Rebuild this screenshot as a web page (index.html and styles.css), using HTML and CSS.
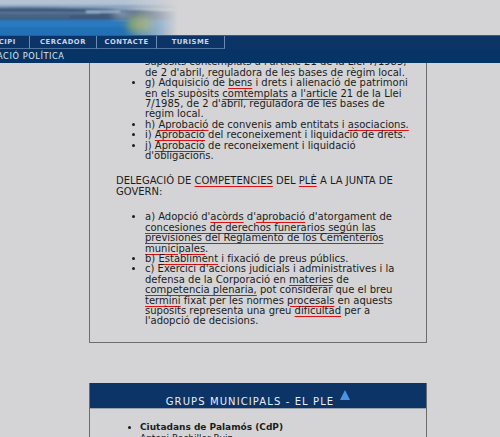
FILE: index.html
```html
<!DOCTYPE html>
<html lang="ca">
<head>
<meta charset="utf-8">
<title>Organització política - El Ple</title>
<link rel="stylesheet" href="styles.css">
</head>
<body>
<header class="header">
  <div class="banner">
    <svg width="500" height="35" viewBox="0 0 500 35" aria-hidden="true">
      <defs>
        <linearGradient id="fade" x1="0" y1="0" x2="1" y2="0">
          <stop offset="0" stop-color="#fff" stop-opacity="1"/>
          <stop offset="0.68" stop-color="#fff" stop-opacity="1"/>
          <stop offset="0.96" stop-color="#fff" stop-opacity="0"/>
        </linearGradient>
        <mask id="m" maskUnits="userSpaceOnUse" x="0" y="0" width="190" height="35">
          <rect x="0" y="0" width="185" height="35" fill="url(#fade)"/>
        </mask>
        <filter id="blur" x="-20%" y="-50%" width="140%" height="200%">
          <feGaussianBlur stdDeviation="1"/>
        </filter>
        <filter id="blur2" x="-50%" y="-50%" width="200%" height="200%">
          <feGaussianBlur stdDeviation="4"/>
        </filter>
      </defs>
      <rect width="500" height="35" fill="#d4d4d6"/>
      <g mask="url(#m)">
        <g filter="url(#blur)">
          <rect x="-10" y="-5" width="200" height="10" fill="#b4c3d3"/>
          <rect x="-10" y="5" width="200" height="4" fill="#8aa3bf"/>
          <path d="M-10 8 C40 7 90 8 140 10 L190 12 L190 20 L-10 21 Z" fill="#3c5a7c"/>
          <rect x="-10" y="12" width="110" height="2" fill="#5d7a9c"/>
          <rect x="-10" y="16" width="80" height="1.5" fill="#4f6d90"/>
          <rect x="86" y="11" width="34" height="1.5" fill="#b9d2ea"/>
          <rect x="-10" y="20" width="200" height="20" fill="#2a7ac2"/>
          <rect x="-10" y="27" width="200" height="10" fill="#226fb6"/>
        </g>
        <ellipse cx="140" cy="24" rx="14" ry="9" fill="#829c62" filter="url(#blur2)"/>
        <ellipse cx="122" cy="14" rx="10" ry="4" fill="#9aaec2" filter="url(#blur2)"/>
      </g>
    </svg>
  </div>
  <nav class="nav">
    <ul class="nav-list">
      <li class="nav-item nav-first">PRINCIPI</li>
      <li class="nav-item nav-w67">CERCADOR</li>
      <li class="nav-item nav-w60">CONTACTE</li>
      <li class="nav-item nav-w68">TURISME</li>
    </ul>
  </nav>
  <div class="subbar"><span class="subbar-text">ORGANITZACIÓ POLÍTICA</span></div>
</header>

<main class="main">
  <div class="scroll">
    <section class="box">
      <ul class="items">
        <li>f) Aprovació de les operacions de crèdit en els supòsits contemplats a l'article 21 de la Llei 7/1985,<br>de 2 d'abril, reguladora de les bases de règim local.</li>
        <li>g) Adquisició de <span class="sp">bens</span> i drets i alienació de patrimoni en els supòsits <span class="sp">comtemplats</span> a <span class="sp">l'article</span> 21 de la Llei 7/1985, de 2 d'abril, reguladora de les bases de règim local.</li>
        <li>h) <span class="sp">Aprobació</span> de convenis amb entitats i <span class="sp">asociacions.</span></li>
        <li>i) <span class="sp">Aprobació</span> del reconeixement i liquidació de drets.</li>
        <li>j) <span class="sp">Aprobació</span> de reconeixement i liquidació d'obligacions.</li>
      </ul>
      <p class="para">DELEGACIÓ DE <span class="sp">COMPETENCIES</span> DEL <span class="sp">PLÈ</span> A LA JUNTA DE GOVERN:</p>
      <ul class="items">
        <li>a) Adopció d'<span class="sp">acòrds</span> d'<span class="sp">aprobació</span> d'atorgament de <span class="sp">concesiones de derechos funerarios según las previsiones del Reglamento de los Cementerios municipales</span>.</li>
        <li>b) <span class="sp">Establiment</span> i fixació de preus públics.</li>
        <li>c) Exercici d'accions judicials i administratives i la defensa de la Corporació en <span class="sp">materies</span> de <span class="sp">competencia plenaria,</span> pot considerar que el breu <span class="sp">termini</span> fixat per les normes <span class="sp">procesals</span> en aquests supòsits representa una greu <span class="sp">dificultad</span> per a l'adopció de decisions.</li>
      </ul>
    </section>

    <section class="groups">
      <h2 class="groups-title"><span class="groups-label">GRUPS MUNICIPALS - EL PLE</span><svg class="up" width="10" height="10" viewBox="0 0 10 10" aria-hidden="true"><polygon points="5,0 10,10 0,10" fill="#4a92e2"/></svg></h2>
      <div class="groups-body">
        <ul class="group-list">
          <li><strong>Ciutadans de Palamós (CdP)</strong>
            <div class="member">Antoni Rochiller Ruiz</div>
          </li>
        </ul>
      </div>
    </section>
  </div>
</main>
</body>
</html>
```

FILE: styles.css
```css
html, body {
  margin: 0;
  padding: 0;
}
body {
  background: #d4d4d6;
  font-family: "DejaVu Sans", Verdana, sans-serif;
  color: #1c1c1c;
  width: 500px;
  height: 437px;
  overflow: hidden;
}
.header {
  display: flex;
  flex-direction: column;
}
.banner {
  height: 35px;
  overflow: hidden;
}
.banner svg {
  display: block;
}
.nav {
  height: 14px;
  background: #0c3467;
  border-top: 1px solid #2a5d92;
  box-sizing: border-box;
  overflow: hidden;
}
.nav-list {
  display: flex;
  margin: 0 0 0 -35px;
  padding: 0;
  list-style: none;
  height: 13px;
}
.nav-item {
  box-sizing: border-box;
  height: 13px;
  border-right: 1px solid #6a8bb3;
  border-bottom: 1px solid #4f74a0;
  color: #c9d5e6;
  font-size: 6.8px;
  font-weight: bold;
  letter-spacing: 0.5px;
  line-height: 12px;
  text-align: center;
}
.nav-first { width: 65px; }
.nav-w67 { width: 67px; }
.nav-w60 { width: 60px; }
.nav-w68 { width: 68px; }

.subbar {
  height: 14px;
  background: #063466;
  overflow: hidden;
  white-space: nowrap;
  font-size: 8.2px;
  line-height: 14px;
}
.subbar-text {
  display: block;
  margin-left: -51px;
  color: #dfe6f0;
  letter-spacing: 0.6px;
}

.main {
  height: 374px;
  overflow: hidden;
}
.scroll {
  margin-top: -27px;
  padding-left: 89px;
}
.box {
  box-sizing: content-box;
  border: 1px solid #6c6c6c;
  padding: 10px 17px 15px 26px;
  width: 293px;
  font-size: 10px;
  line-height: 10.4px;
}
.items {
  margin: 0 0 15px 0;
  padding-left: 29px;
  list-style: disc;
}
.para {
  margin: 0 0 15px 0;
}
.box > .items:last-child {
  margin-bottom: 0;
}
.sp {
  text-decoration: underline;
  text-decoration-color: #e01010;
  text-decoration-thickness: 1px;
  text-underline-offset: 2px;
}

.groups {
  margin-top: 40px;
  width: 336px;
  border-left: 1px solid #6c6c6c;
  border-right: 1px solid #6c6c6c;
}
.groups-title {
  margin: 0;
  height: 25px;
  box-sizing: border-box;
  display: flex;
  justify-content: center;
  align-items: flex-start;
  gap: 6px;
  background: #0c3467;
  font-size: 10px;
  font-weight: normal;
  line-height: 11px;
}
.groups-label {
  margin-top: 13px;
  color: #e8eef6;
  letter-spacing: 1.1px;
}
.up {
  display: block;
  margin-top: 7px;
}
.groups-body {
  border-top: 1px solid #9aa3ad;
  padding-top: 13px;
  font-size: 9px;
  line-height: 11px;
}
.group-list {
  margin: 0;
  padding-left: 50px;
}
.member {
  font-weight: normal;
}
```
